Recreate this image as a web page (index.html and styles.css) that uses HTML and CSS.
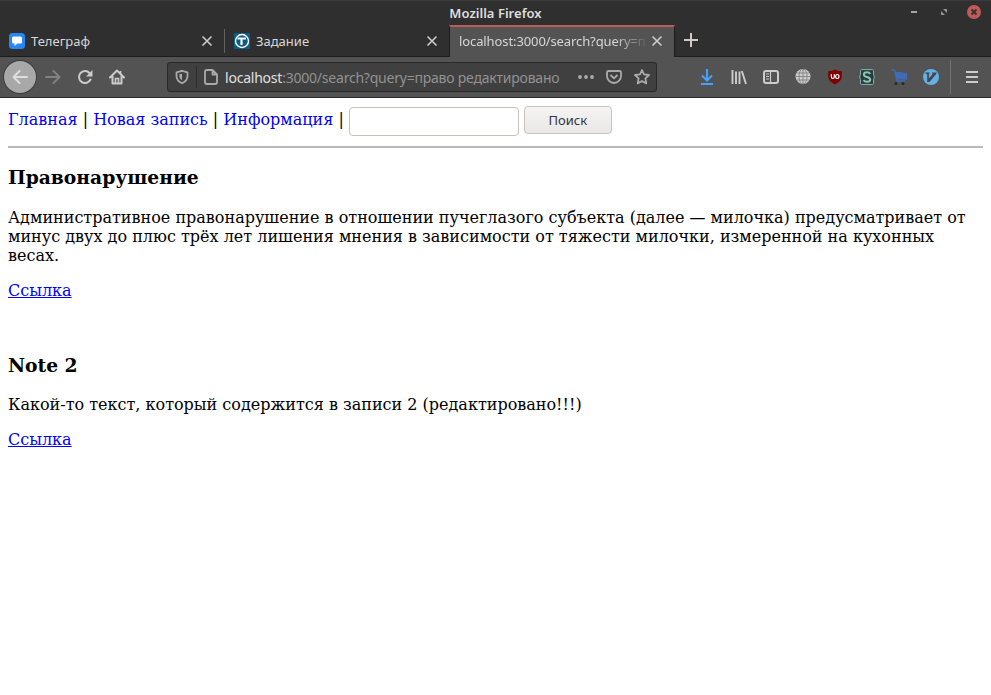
FILE: index.html
```html
<!DOCTYPE html>
<html lang="ru">
<head>
<meta charset="utf-8">
<title>Mozilla Firefox</title>
<link rel="stylesheet" href="styles.css">
</head>
<body>
<header class="titlebar">
  <span class="window-title">Mozilla Firefox</span>
  <div class="window-controls">
    <svg width="14" height="14" viewBox="0 0 14 14"><path d="M4 6h6v2H4z" fill="#a5a5a5"/></svg>
    <svg width="14" height="14" viewBox="0 0 14 14"><path d="M6 4h4v4zM4 6v4h4z" fill="#959595"/></svg>
    <svg width="14" height="14" viewBox="0 0 14 14"><circle cx="7" cy="7" r="7" fill="#bf5b58"/><path d="M4.500 4.500l5 5m0-5l-5 5" stroke="#353030" stroke-width="1.800"/></svg>
  </div>
</header>
<div class="tabs">
  <div class="tab">
    <svg class="favicon" width="16" height="16" viewBox="0 0 16 16"><rect width="16" height="16" rx="3.500" fill="#2787f5"/><path d="M4.500 3.500h7Q13 3.500 13 5v4q0 1.500-1.500 1.500H8.500L5.500 13v-2.500h-1Q3 10.500 3 9V5q0-1.500 1.500-1.500z" fill="#fff"/></svg>
    <span class="tab-label">Телеграф</span>
    <svg class="close" width="12" height="12" viewBox="0 0 12 12"><path d="M1.500 1.500l9 9m0-9l-9 9"/></svg>
  </div>
  <div class="tab divided">
    <svg class="favicon" width="16" height="16" viewBox="0 0 16 16"><path fill="#0b5c89" d="M0 0h16v16H0z"/><circle cx="8" cy="8" r="6.500" fill="none" stroke="#fff" stroke-width="1.400"/><path d="M3.500 5.500h8.500M7.500 5.500V12" stroke="#fff" stroke-width="2.200" fill="none"/></svg>
    <span class="tab-label">Задание</span>
    <svg class="close" width="12" height="12" viewBox="0 0 12 12"><path d="M1.500 1.500l9 9m0-9l-9 9"/></svg>
  </div>
  <div class="tab active">
    <span class="tab-label query">localhost:3000/search?query=п</span>
    <svg class="close" width="12" height="12" viewBox="0 0 12 12"><path d="M1.500 1.500l9 9m0-9l-9 9"/></svg>
  </div>
  <svg class="new-tab" width="14" height="14" viewBox="0 0 14 14"><path d="M7 0v14M0 7h14" stroke="#d0cac8" stroke-width="2"/></svg>
</div>
<div class="toolbar">
  <div class="navigation">
    <div class="back"><svg width="16" height="16" viewBox="0 0 16 16"><path class="line" d="M15 8H1.500M7.500 2l-6 6 6 6"/></svg></div>
    <svg class="forward" width="16" height="16" viewBox="0 0 16 16"><path class="line" d="M1 8h13.500M8.500 2l6 6-6 6"/></svg>
    <svg width="16" height="16" viewBox="0 0 16 16"><path class="line" d="M13.500 10.500A6 6 0 1 1 12.500 4L14 5.500"/><path d="M15.500 1v6.500H9z" fill="#ccc"/></svg>
    <svg width="16" height="16" viewBox="0 0 16 16"><path class="line" d="M1 8.500l7-7 7 7M3.500 7v7.500h9V7"/><path d="M6.500 14V9.500h3V14M11.500 2v3" fill="none" stroke="#ccc" stroke-width="1.700"/></svg>
  </div>
  <div class="urlbar">
    <div class="shield"><svg width="14" height="14" viewBox="0 0 14 14"><path class="url-line" d="M7 .8l5.500 1.500V6c0 4-2.200 5.700-5.500 7.200C3.700 11.700 1.500 10 1.500 6V2.300z"/><path d="M7 3.700v6.600C5 9 4.300 8 4.300 4.300z" fill="#aaa"/></svg></div>
    <svg class="page" width="14" height="16" viewBox="0 0 14 16"><path class="url-line" d="M3 1h5.500L13 5.500V13q0 2-2 2H3q-2 0-2-2V3q0-2 2-2zM8.500 1v4.500H13"/></svg>
    <span class="address"><span class="host">localhost</span>:3000/search?query=право редактировано</span>
    <svg class="dots" width="16" height="16" viewBox="0 0 16 16" fill="#aaa"><circle cx="2" cy="8" r="1.900"/><circle cx="8" cy="8" r="1.900"/><circle cx="14" cy="8" r="1.900"/></svg>
    <svg class="pocket" width="16" height="16" viewBox="0 0 16 16"><path class="url-line" d="M2.500 2h11q1.500 0 1.500 1.500V7A7 7 0 0 1 1 7V3.500Q1 2 2.500 2zM4.500 6L8 9.400 11.500 6"/></svg>
    <svg class="star" width="16" height="16" viewBox="0 0 16 16"><path class="url-line" d="M8 1l2 4.400 5 .6-3.600 3.400.9 5L8 12l-4.300 2.400.9-5L1 6l5-.6z"/></svg>
  </div>
  <div class="extensions">
    <svg width="16" height="16" viewBox="0 0 16 16"><path d="M8 0v11M3 6.500l5 5 5-5M2 15h12" fill="none" stroke="#45a1ff" stroke-width="2"/></svg>
    <svg width="16" height="16" viewBox="0 0 16 16"><path d="M1.500 1v14M5 2.500V15M8.500 2.500V15M10.800 2L15 15" stroke="#ccc" stroke-width="1.900" fill="none"/></svg>
    <svg width="16" height="16" viewBox="0 0 16 16"><rect class="line" x="1" y="2" width="14" height="12" rx="2"/><path d="M7.500 2v12M3 5h3M3 7.500h3M3 10h3" stroke="#ccc" stroke-width="1.200"/></svg>
    <svg width="16" height="16" viewBox="0 0 16 16"><circle cx="8" cy="7.500" r="7.500" fill="#ccc"/><path d="M.5 7.500h15M2 4h12M2 11h12M8 0v15" stroke="#7b7b7b" stroke-width=".8"/><ellipse cx="8" cy="7.500" rx="4" ry="7.500" fill="none" stroke="#7b7b7b" stroke-width=".8"/></svg>
    <svg width="16" height="16" viewBox="0 0 16 16"><path d="M8 .5q2.500 1.700 6.800 1.700v5.300q0 4.500-6.800 8-6.800-3.500-6.800-8V2.200Q5.500 2.200 8 .5z" fill="#800000"/><path d="M4.300 5.300v2.500q0 1.700 1.500 1.700t1.500-1.700V5.300" fill="none" stroke="#fff" stroke-width="1.200"/><ellipse cx="10.300" cy="7.500" rx="1.700" ry="2" fill="none" stroke="#fff" stroke-width="1.200"/></svg>
    <svg width="16" height="16" viewBox="0 0 16 16"><path d="M2.500.6h11q1 0 1 1v4l1 2.400-1 2.400v4q0 1-1 1h-11q-1 0-1-1v-4L.5 8l1-2.400v-4q0-1 1-1z" fill="#263d3d" stroke="#84b5aa"/><path d="M11.200 5Q10.500 3.300 8 3.300 4.900 3.300 4.900 5.400 4.900 7.200 8 7.900t3.200 2.600Q11.200 12.700 8 12.700q-2.500 0-3.500-1.700" fill="none" stroke="#8fc1b5" stroke-width="2"/></svg>
    <svg width="16" height="16" viewBox="0 0 16 16"><path d="M0 .8h3.500L6 12h8" fill="none" stroke="#416bb5" stroke-width="1.300"/><path d="M3.500 2.500L16 4v6.500H5.500z" fill="#416bb5"/><circle cx="5" cy="14.500" r="1.500" fill="#292929"/><circle cx="12" cy="14.500" r="1.500" fill="#292929"/></svg>
    <svg width="16" height="16" viewBox="0 0 16 16"><circle cx="8" cy="8" r="8" fill="#65b1e3"/><path d="M2.500 3.500h4v1.200l-.6.500v4L10 4.800 9 4.500v-1h4.500v1.300L6.500 13H4.200V5.200l-1.700-.5z" fill="#414950"/></svg>
  </div>
  <div class="menu"><svg width="12" height="14" viewBox="0 0 12 14"><path d="M0 2h12M0 7h12M0 12h12" stroke="#ccc" stroke-width="2"/></svg></div>
</div>
<main>
  <nav>
    <a href="#">Главная</a><span>|</span><a href="#">Новая запись</a><span>|</span><a href="#">Информация</a><span>|</span>
    <input class="search" type="text" aria-label="Поиск">
    <button type="button">Поиск</button>
  </nav>
  <hr>
  <article>
    <h3>Правонарушение</h3>
    <p>Административное правонарушение в отношении пучеглазого субъекта (далее — милочка) предусматривает от минус двух до плюс трёх лет лишения мнения в зависимости от тяжести милочки, измеренной на кухонных весах.</p>
    <p><a href="#">Ссылка</a></p>
  </article>
  <article>
    <h3>Note 2</h3>
    <p>Какой-то текст, который содержится в записи 2 (редактировано!!!)</p>
    <p><a href="#">Ссылка</a></p>
  </article>
</main>
</body>
</html>
```
FILE: styles.css
```css
* { box-sizing: border-box; }
html, body { height: 100%; overflow: hidden; }
body { margin: 0; background: #fff; color: #000; font: 16px/19px "DejaVu Serif", serif; }
svg { display: block; flex: none; }
a { color: #00f; }

.titlebar, .tabs, .toolbar, button { font-family: "Noto Sans", sans-serif; }
.titlebar { height: 25px; display: grid; grid-template-columns: 1fr auto 1fr; background: #2f2f2f; border-top: 1px solid #3a3a3a; }
.window-title { grid-column: 2; color: #dedede; font-size: 13px; line-height: 25px; font-weight: 600; letter-spacing: .03px; }
.window-controls { display: flex; justify-content: flex-end; gap: 16px; padding: 4px 10px 0 0; }

.tabs { height: 32px; display: flex; background: #2f2f2f; color: #d7d7d7; font-size: 13px; border-bottom: 1px solid #1c1c1c; }
.tab { width: 225px; height: 31px; display: flex; align-items: center; padding: 1px 12px 0 9px; }
.divided::before { content: ""; width: 1px; height: 24px; background: #606060; margin: 0 9px 0 -10px; }
.tab-label { line-height: 20px; margin-left: 6px; white-space: nowrap; }
.close { margin-left: auto; fill: none; stroke: #ccc; stroke-width: 1.6; }
.active { height: 32px; width: 226px; margin-left: -1px; background: #535353; border: 1px solid #1c1c1c; border-width: 0 1px; border-top: 2px solid #b85d59; padding: 0 11px 2px 9px; }
.query { width: 188px; margin: 0; overflow: hidden; letter-spacing: -.1px; -webkit-mask-image: linear-gradient(to right, #000 155px, transparent 190px); mask-image: linear-gradient(to right, #000 155px, transparent 190px); }
.new-tab { margin: 8px 0 0 9px; }

.toolbar { height: 41px; display: flex; align-items: center; background: #535353; border-bottom: 1px solid #292929; }
.line { fill: none; stroke: #ccc; stroke-width: 2; stroke-linejoin: round; stroke-linecap: round; }
.navigation { display: flex; width: 167px; align-items: center; gap: 16px; padding-left: 4px; }
.back { width: 32px; height: 32px; margin-right: -7px; border-radius: 50%; background: #a8a8a8; box-shadow: 0 0 0 1px #3b3b3b; display: grid; place-items: center; }
.back .line { stroke: #dedede; }
.forward { opacity: .38; }
.urlbar { display: flex; align-items: center; width: 490px; height: 30px; background: #404040; border: 1px solid #292929; border-radius: 3px; }
.shield { width: 29px; height: 22px; display: grid; place-items: center; border-right: 1px solid #2b2b2b; }
.page { margin-left: 7px; }
.url-line { fill: none; stroke: #aaa; stroke-width: 1.8; stroke-linejoin: round; }
.address { color: #929292; font-size: 14px; letter-spacing: -.22px; margin-left: 7px; flex: 1; white-space: nowrap; }
.host { color: #e0e0e0; }
.dots { margin-right: 12px; }
.pocket { margin-right: 12px; }
.star { margin-right: 6px; }
.extensions { display: flex; gap: 16px; margin-left: 42px; }
.menu { width: 41px; height: 34px; margin-left: 11px; padding-left: 15px; border-left: 1px solid #727272; display: flex; align-items: center; }

main { padding: 8px; }
nav { display: flex; height: 30px; align-items: flex-start; }
nav a { text-decoration: none; margin-top: 4px; }
nav span { margin: 4px 5.09px 0; }
.search { width: 170px; height: 29px; margin: 1px 5px 0 0; border: 1px solid #c6c2be; border-radius: 4px; background: #fff; }
button { width: 88px; height: 28px; padding: 0; border: 1px solid #c6c2be; border-radius: 4px; background: linear-gradient(#f5f4f3, #eae8e6); color: #30353a; font-size: 13px; }
hr { height: 2px; margin: 10px 0 18px; border: 0; background: #b9b9b9; }
h3 { height: 22px; margin: 0 0 20px; font-size: 18.72px; line-height: 22px; }
p { margin: 0 0 16px; }
article + article { margin-top: 54px; }
article + article h3 { margin-bottom: 19px; }
article p:last-child { margin: 0; }
```
